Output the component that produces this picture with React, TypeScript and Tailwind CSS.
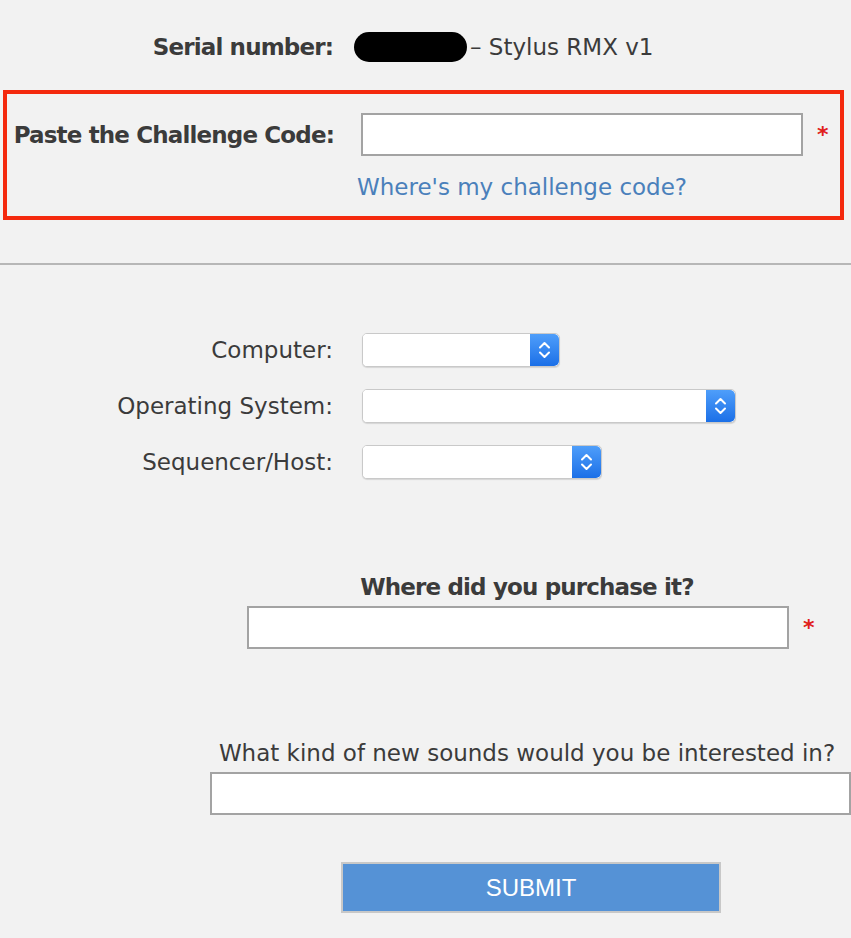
import React from "react";

const sans = "font-['DejaVu_Sans',sans-serif]";
const bold = "font-bold tracking-[-0.85px]";

function Stepper() {
  return (
    <div className="flex h-full w-[29px] items-center justify-center rounded-r-[5px] bg-gradient-to-b from-[#4e9efa] to-[#1b6fe7]">
      <svg width="13" height="22" viewBox="0 0 13 22" fill="none" stroke="white" strokeWidth="2" strokeLinecap="round" strokeLinejoin="round">
        <path d="M2 8.5 6.5 4l4.5 4.5" />
        <path d="M2 13.5 6.5 18l4.5-4.5" />
      </svg>
    </div>
  );
}

function Select({ width }: { width: string }) {
  return (
    <div className={`flex h-[34px] ${width} overflow-hidden rounded-[5px] border border-[#c9c9c9] bg-white shadow-[0_1px_1px_rgba(0,0,0,0.12)]`}>
      <select className="h-full flex-1 appearance-none bg-white outline-none" />
      <Stepper />
    </div>
  );
}

const rows = [
  { label: "Computer:", width: "w-[198px]" },
  { label: "Operating System:", width: "w-[374px]" },
  { label: "Sequencer/Host:", width: "w-[240px]" },
];

export default function App() {
  return (
    <div className={`h-[938px] w-[851px] overflow-hidden bg-[#f2f2f2] text-[23px] leading-[28px] text-[#3b3b3b] ${sans}`}>
      {/* serial */}
      <div className="mt-[32px] flex items-center">
        <div className={`w-[333px] text-right ${bold}`}>Serial number:</div>
        <div className="ml-[21px] h-[30px] w-[113px] rounded-full bg-black" />
        <div className="ml-[3px]">– Stylus RMX v1</div>
      </div>

      {/* challenge code */}
      <div className="ml-[3px] mt-[28px] h-[130px] w-[841px] border-4 border-[#f4290e] pt-[19px]">
        <div className="flex items-center">
          <div className={`w-[327px] text-right ${bold}`}>Paste the Challenge Code:</div>
          <input className="ml-[27px] h-[43px] w-[442px] border-2 border-[#a3a3a3] bg-white outline-none" />
          <span className="ml-[14px] text-[22px] font-bold text-[#e0201b]">*</span>
        </div>
        <a href="#" className="ml-[350px] mt-[17px] block w-fit text-[#4a80bb]">
          Where's my challenge code?
        </a>
      </div>

      <div className="mt-[43px] border-t-2 border-[#b7b7b7]" />

      {/* system selects */}
      <div className="mt-[68px] flex flex-col gap-[22px]">
        {rows.map((r) => (
          <div key={r.label} className="flex items-center">
            <div className="w-[333px] text-right">{r.label}</div>
            <div className="ml-[29px]">
              <Select width={r.width} />
            </div>
          </div>
        ))}
      </div>

      {/* purchase */}
      <div className={`ml-[200px] mt-[94px] w-[654px] text-center ${bold}`}>Where did you purchase it?</div>
      <div className="mt-[5px] flex items-center">
        <input className="ml-[247px] h-[43px] w-[542px] border-2 border-[#a3a3a3] bg-white outline-none" />
        <span className="ml-[14px] text-[22px] font-bold text-[#e0201b]">*</span>
      </div>

      {/* interests */}
      <div className="ml-[200px] mt-[90px] w-[654px] text-center">What kind of new sounds would you be interested in?</div>
      <input className="ml-[210px] mt-[5px] block h-[43px] w-[641px] border-2 border-[#a3a3a3] bg-white outline-none" />

      <button className="ml-[341px] mt-[47px] flex h-[51px] w-[380px] items-center justify-center border-2 border-[#c8c8c8] bg-[#5592d6] font-['Liberation_Sans',sans-serif] text-[24px] text-white">
        SUBMIT
      </button>
    </div>
  );
}
